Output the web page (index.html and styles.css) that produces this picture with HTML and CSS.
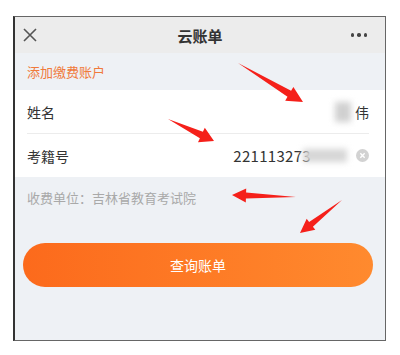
FILE: index.html
```html
<!DOCTYPE html>
<html lang="zh">
<head>
<meta charset="utf-8">
<link rel="stylesheet" href="styles.css">
</head>
<body>
<div class="frame">
  <div class="header">
    <svg class="close" width="14" height="14" viewBox="0 0 14 14"><path d="M1 1 L13 13 M13 1 L1 13" stroke="#555" stroke-width="1.6" fill="none"/></svg>
    <div class="title">云账单</div>
    <div class="dots"><span></span><span></span><span></span></div>
  </div>
  <div class="section-title">添加缴费账户</div>
  <div class="card">
    <div class="row">
      <div class="label">姓名</div>
      <div class="value"><span class="smudge smudge-name"></span>伟</div>
    </div>
    <div class="row">
      <div class="label">考籍号</div>
      <div class="value"><span class="num">221113273</span><span class="smudge smudge-num"></span><span class="clear"><svg width="13" height="13" viewBox="0 0 12 12"><circle cx="6" cy="6" r="6" fill="#d2d2d2"/><path d="M4 4 L8 8 M8 4 L4 8" stroke="#fff" stroke-width="1.3"/></svg></span></div>
    </div>
  </div>
  <div class="payee">收费单位：吉林省教育考试院</div>
  <div class="btn">查询账单</div>
</div>
<svg class="arrows" width="400" height="355" viewBox="0 0 400 355">
  <polygon fill="#f5201a" points="238,63 287.5,96.8 285.2,100.7 303,102 293.4,86.9 291.1,90.8"/>
  <polygon fill="#f5201a" points="168,119 199.9,138.2 198,142.2 214,141 204.8,127.8 202.9,131.8"/>
  <polygon fill="#f5201a" points="296,197 246.1,192.4 246.2,188.4 232,195 245.8,202.4 245.9,198.4"/>
  <polygon fill="#f5201a" points="342,200 309.1,221.9 306.7,218.8 300,233 315.3,229.8 312.9,226.7"/>
</svg>
</body>
</html>
```
FILE: styles.css
```css
html, body {
  margin: 0;
  padding: 0;
  background: #ffffff;
  font-family: "Noto Sans CJK SC", "Noto Sans", sans-serif;
}
body {
  width: 400px;
  height: 355px;
  position: relative;
  overflow: hidden;
}
.frame {
  margin: 16px 0 0 13px;
  width: 370px;
  height: 323px;
  border: 1px solid #666;
  border-left: 2px solid #333;
  background: #eef1f5;
  display: flex;
  flex-direction: column;
}
.header {
  height: 36px;
  background: #ececec;
  display: flex;
  align-items: center;
  justify-content: space-between;
  padding: 0 18px 0 8px;
  position: relative;
}
.close {
  display: block;
}
.title {
  position: absolute;
  left: 0;
  right: 0;
  text-align: center;
  font-size: 15px;
  font-weight: 700;
  color: #333;
  pointer-events: none;
}
.dots {
  display: flex;
  gap: 3px;
}
.dots span {
  width: 3.5px;
  height: 3.5px;
  border-radius: 50%;
  background: #444;
}
.section-title {
  height: 37px;
  display: flex;
  align-items: center;
  padding-left: 12px;
  font-size: 13px;
  color: #f07a3c;
}
.card {
  background: #fff;
  padding: 0 16px 0 12px;
}
.row {
  height: 43px;
  display: flex;
  align-items: center;
  justify-content: space-between;
  font-size: 14px;
  color: #333;
}
.row + .row {
  border-top: 1px solid #ececec;
}
.value {
  display: flex;
  align-items: center;
  color: #333;
  font-size: 14px;
}
.num {
  font-size: 15px;
  letter-spacing: 0.3px;
}
.smudge {
  display: inline-block;
  background: #d0d0d0;
  filter: blur(3px);
}
.smudge-name {
  width: 16px;
  height: 20px;
  margin-right: 4px;
}
.smudge-num {
  width: 44px;
  height: 13px;
  margin-left: -8px;
  margin-right: 9px;
  background: #d6d6d6;
}
.clear {
  display: flex;
}
.payee {
  height: 40px;
  display: flex;
  align-items: center;
  padding-left: 12px;
  font-size: 13px;
  color: #a9a9a9;
}
.btn {
  margin: 26px 12px 0 8px;
  height: 44px;
  border-radius: 22px;
  background: linear-gradient(90deg, #fc6a1c, #ff8a2e);
  color: #fff;
  font-size: 14px;
  display: flex;
  align-items: center;
  justify-content: center;
}
.arrows {
  position: absolute;
  left: 0;
  top: 0;
}
```
